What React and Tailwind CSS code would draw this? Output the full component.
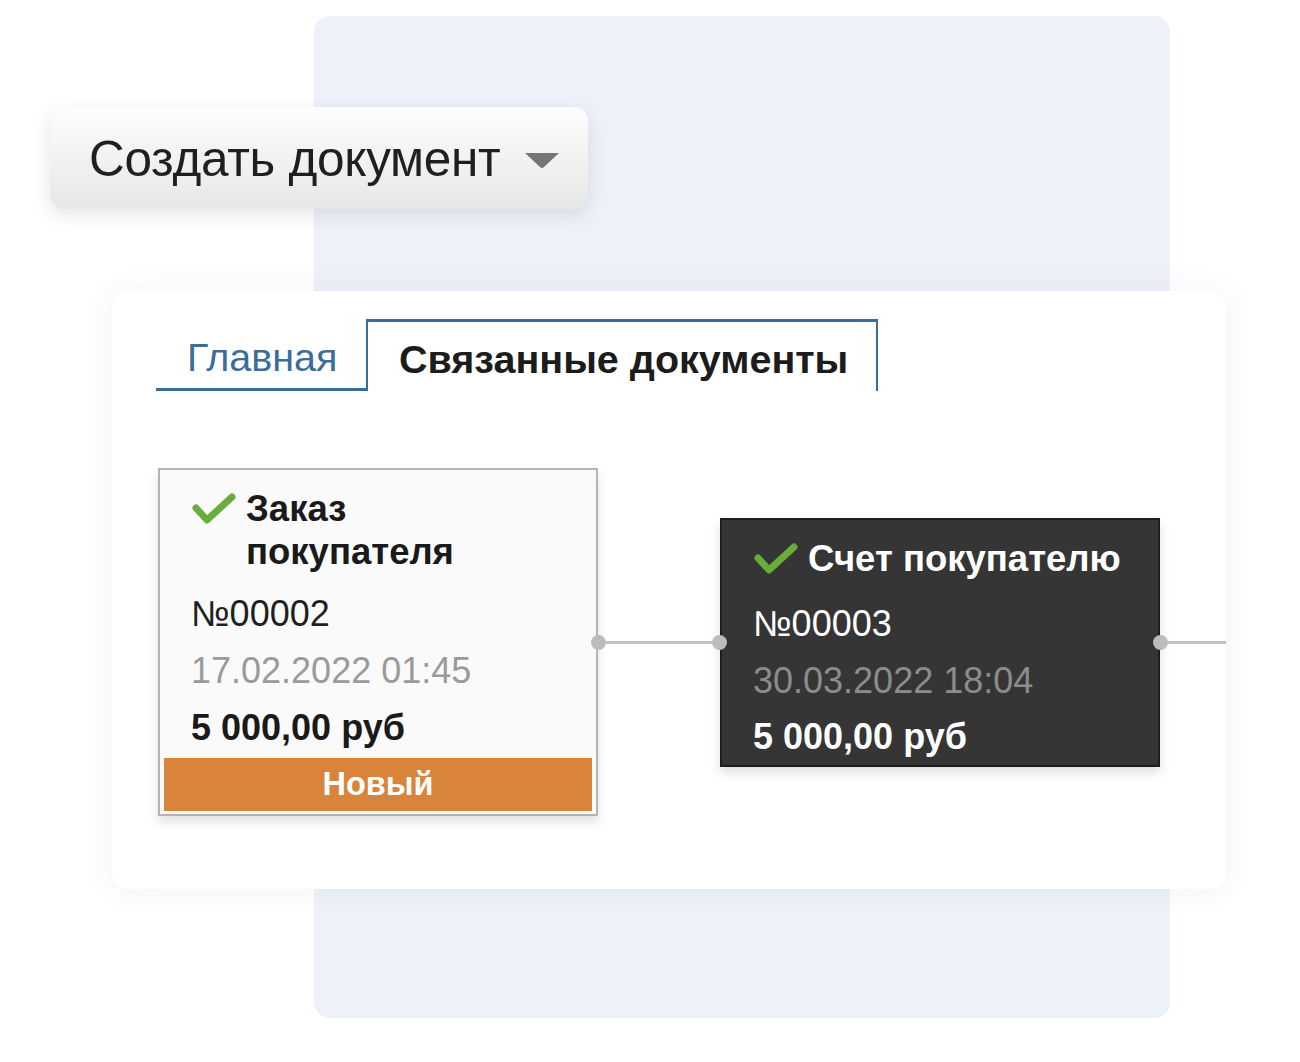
import React from "react";

function Check() {
  return (
    <svg width="44" height="32" viewBox="0 0 44 32" className="shrink-0">
      <path d="M4 15 L15 27 L40 4" fill="none" stroke="#69ad3c" strokeWidth="7" strokeLinecap="round" strokeLinejoin="round" />
    </svg>
  );
}

function Dot() {
  return <div className="w-[15px] h-[15px] rounded-full bg-[#bcbcbc] shrink-0" />;
}

export default function App() {
  const font = { fontFamily: '"Liberation Sans", Arial, Helvetica, sans-serif' };
  return (
    <div className="relative w-[1300px] h-[1062px] bg-white overflow-hidden" style={font}>
      <div className="absolute left-[314px] top-[16px] w-[856px] h-[1002px] rounded-[16px] bg-[#edf1fa]" />
      <div className="relative flex flex-col">
        <div className="ml-[50px] mt-[107px] w-[538px] h-[102px] rounded-[14px] bg-gradient-to-b from-[#fdfdfd] to-[#e7e7e7] shadow-[0_6px_20px_rgba(0,0,0,0.10)] flex items-center pl-[39px]">
          <span className="text-[49.5px] text-[#1f1f1f] tracking-[-0.3px] leading-none pt-[2px] whitespace-nowrap">Создать документ</span>
          <svg width="36" height="17" viewBox="0 0 36 17" className="ml-[24px] mt-[4px] shrink-0">
            <path d="M1 1 L35 1 L20 15 Q18 17 16 15 Z" fill="#767676" />
          </svg>
        </div>
        <div className="ml-[112px] mt-[82px] w-[1114px] h-[598px] rounded-[16px] bg-white shadow-[0_0_30px_rgba(60,70,100,0.07)] overflow-hidden pt-[28px]">
          <div className="flex items-end pl-[44px]">
            <div className="w-[210px] h-[71px] shrink-0 border-b-[3px] border-[#3a6d9e] flex items-center pl-[31px] pt-[7px]">
              <span className="text-[39.5px] text-[#3a6d9e] leading-none">Главная</span>
            </div>
            <div className="h-[72px] shrink-0 border-t-[3px] border-l-[2px] border-r-[2px] border-[#3a6d9e] flex items-center pl-[31px] pr-[28px] pt-[7px]">
              <span className="text-[39.5px] font-bold text-[#1c1c1c] leading-none whitespace-nowrap">Связанные документы</span>
            </div>
          </div>
          <div className="flex items-center mt-[77px] pl-[46px]">
            <div className="relative w-[440px] h-[348px] shrink-0 border-2 border-[#b4b4b4] bg-[#fafafa] shadow-[0_6px_10px_rgba(0,0,0,0.12)] flex flex-col">
              <div className="flex items-start pl-[32px] pt-[17px]">
                <div className="mt-[6px]"><Check /></div>
                <div className="ml-[10px] text-[36.5px] font-bold text-[#1a1a1a] leading-[43px]">
                  Заказ<br />покупателя
                </div>
              </div>
              <div className="pl-[31px] mt-[12px] text-[36px] text-[#1f1f1f] leading-[57px]">№00002</div>
              <div className="pl-[31px] text-[36px] text-[#9a9a9a] leading-[57px]">17.02.2022 01:45</div>
              <div className="pl-[31px] text-[36px] font-bold text-[#1a1a1a] leading-[57px]">5 000,00 руб</div>
              <div className="mt-auto mx-[4px] mb-[3px] h-[53px] bg-[#d8843a] flex items-center justify-center">
                <span className="text-[32.5px] font-bold text-white leading-none">Новый</span>
              </div>
            </div>
            <div className="relative z-10 flex items-center shrink-0 -ml-[7px] -mr-[7px]">
              <Dot />
              <div className="w-[106px] h-[3px] bg-[#c2c2c2]" />
              <Dot />
            </div>
            <div className="w-[440px] h-[249px] shrink-0 border-2 border-[#1d1d1d] bg-[#353535] shadow-[0_6px_10px_rgba(0,0,0,0.12)] flex flex-col">
              <div className="flex items-start pl-[32px] pt-[17px]">
                <div className="mt-[6px]"><Check /></div>
                <div className="ml-[10px] text-[36.5px] font-bold text-white leading-[43px] whitespace-nowrap">Счет покупателю</div>
              </div>
              <div className="pl-[31px] mt-[15px] text-[36px] text-white leading-[57px]">№00003</div>
              <div className="pl-[31px] text-[36px] text-[#8c8c8c] leading-[57px]">30.03.2022 18:04</div>
              <div className="pl-[31px] text-[36px] font-bold text-white leading-[55px]">5 000,00 руб</div>
            </div>
            <div className="relative z-10 flex items-center shrink-0 -ml-[7px]">
              <Dot />
              <div className="w-[80px] h-[3px] bg-[#c2c2c2]" />
            </div>
          </div>
        </div>
      </div>
    </div>
  );
}
